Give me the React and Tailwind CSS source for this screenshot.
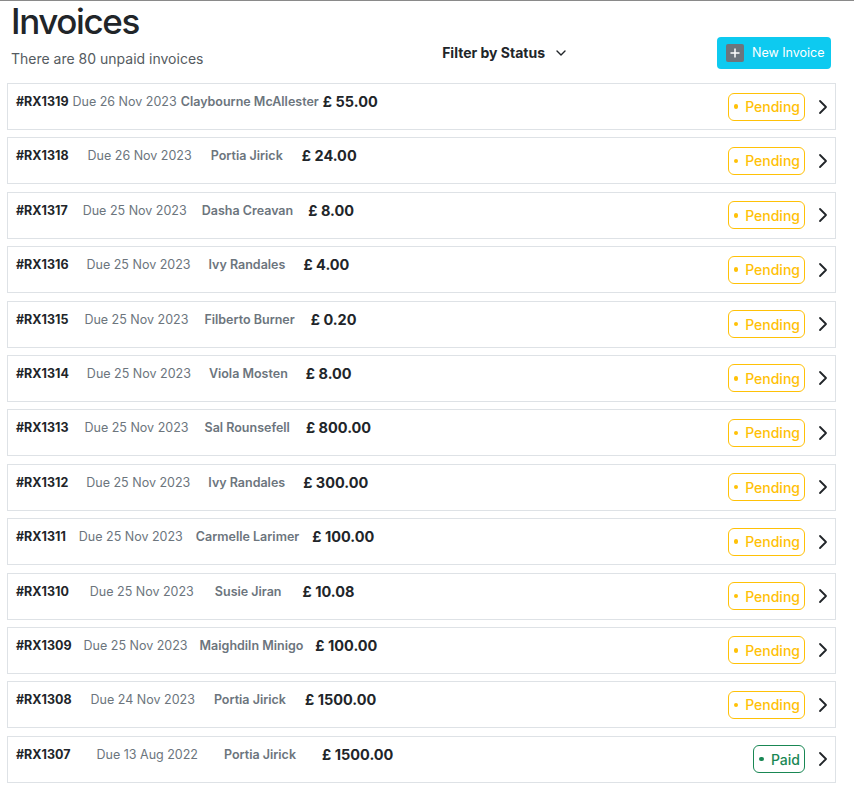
import React from "react";

const rows = [
  { id: "#RX1319", due: "Due 26 Nov 2023", name: "Claybourne McAllester", amt: "£ 55.00", st: "Pending", gap: "gap-[4px]" },
  { id: "#RX1318", due: "Due 26 Nov 2023", name: "Portia Jirick", amt: "£ 24.00", st: "Pending", gap: "gap-[19px]" },
  { id: "#RX1317", due: "Due 25 Nov 2023", name: "Dasha Creavan", amt: "£ 8.00", st: "Pending", gap: "gap-[15px]" },
  { id: "#RX1316", due: "Due 25 Nov 2023", name: "Ivy Randales", amt: "£ 4.00", st: "Pending", gap: "gap-[18px]" },
  { id: "#RX1315", due: "Due 25 Nov 2023", name: "Filberto Burner", amt: "£ 0.20", st: "Pending", gap: "gap-[16px]" },
  { id: "#RX1314", due: "Due 25 Nov 2023", name: "Viola Mosten", amt: "£ 8.00", st: "Pending", gap: "gap-[18px]" },
  { id: "#RX1313", due: "Due 25 Nov 2023", name: "Sal Rounsefell", amt: "£ 800.00", st: "Pending", gap: "gap-[16px]" },
  { id: "#RX1312", due: "Due 25 Nov 2023", name: "Ivy Randales", amt: "£ 300.00", st: "Pending", gap: "gap-[18px]" },
  { id: "#RX1311", due: "Due 25 Nov 2023", name: "Carmelle Larimer", amt: "£ 100.00", st: "Pending", gap: "gap-[13px]" },
  { id: "#RX1310", due: "Due 25 Nov 2023", name: "Susie Jiran", amt: "£ 10.08", st: "Pending", gap: "gap-[21px]" },
  { id: "#RX1309", due: "Due 25 Nov 2023", name: "Maighdiln Minigo", amt: "£ 100.00", st: "Pending", gap: "gap-[12px]" },
  { id: "#RX1308", due: "Due 24 Nov 2023", name: "Portia Jirick", amt: "£ 1500.00", st: "Pending", gap: "gap-[19px]" },
  { id: "#RX1307", due: "Due 13 Aug 2022", name: "Portia Jirick", amt: "£ 1500.00", st: "Paid", gap: "gap-[26px]" },
];

function Badge({ st }) {
  const paid = st === "Paid";
  return (
    <div
      className={
        "flex h-[28px] items-center rounded-[6px] border pl-[5px] pr-[4px] text-[14px] font-medium " +
        (paid ? "border-[#198754] text-[#198754]" : "border-[#ffc107] text-[#ffc107]")
      }
    >
      <span className={"mr-[7px] h-[4.5px] w-[4.5px] rounded-full " + (paid ? "bg-[#198754]" : "bg-[#ffc107]")} />
      {st}
    </div>
  );
}

function Chevron() {
  return (
    <svg width="12" height="16" viewBox="0 0 12 16" className="text-[#212529]">
      <polyline points="3,2 9,8 3,14" fill="none" stroke="currentColor" strokeWidth="1.8" strokeLinecap="round" strokeLinejoin="round" />
    </svg>
  );
}

export default function App() {
  return (
    <div className="min-h-[786px] w-[854px] border-t border-[#8a8a8a] bg-white text-[#212529]" style={{ fontFamily: "Inter, 'Noto Sans', sans-serif" }}>
      <div className="flex items-start pl-[11px] pr-[23px]">
        <div className="flex-1">
          <h1 className="mt-[2px] text-[35px] font-medium leading-[36px] tracking-[-1.4px]">Invoices</h1>
          <p className="mt-[10px] text-[14px] leading-[20px] text-[#555b61]">There are 80 unpaid invoices</p>
        </div>
        <div className="mt-[42px] flex items-center">
          <span className="text-[14px] font-bold leading-[20px]">Filter by Status</span>
          <svg width="12" height="8" viewBox="0 0 12 8" className="ml-[10px]">
            <polyline points="2,2 6,6 10,2" fill="none" stroke="#212529" strokeWidth="1.4" strokeLinecap="round" strokeLinejoin="round" />
          </svg>
        </div>
        <button className="ml-[150px] mt-[36px] flex h-[32px] w-[114px] items-center rounded-[4px] bg-[#0dcaf0] pl-[9px] text-[12.5px] text-white">
          <span className="mr-[8px] flex h-[18px] w-[18px] items-center justify-center rounded-[2px] bg-[#6c757d]">
            <svg width="12" height="12" viewBox="0 0 12 12">
              <path d="M6 1.5v9M1.5 6h9" stroke="white" strokeWidth="1.5" />
            </svg>
          </span>
          New Invoice
        </button>
      </div>
      <div className="mt-[14px] flex flex-col gap-[7.4px] pl-[7px] pr-[18px]">
        {rows.map((r) => (
          <div key={r.id} className="flex h-[47px] items-center border border-[#dee2e6] pl-[8px] pr-[6px]">
            <div className={"flex flex-1 items-start self-start pt-[6px] " + r.gap}>
              <span className="mt-[2px] text-[12.5px] font-bold leading-[19px]">{r.id}</span>
              <span className="mt-[2px] text-[12.5px] leading-[19px] text-[#6c757d]">{r.due}</span>
              <span className="mt-[2px] text-[12.5px] font-semibold leading-[19px] text-[#6c757d]">{r.name}</span>
              <span className="text-[14.5px] font-bold leading-[24px]">{r.amt}</span>
            </div>
            <Badge st={r.st} />
            <div className="ml-[12px]">
              <Chevron />
            </div>
          </div>
        ))}
      </div>
    </div>
  );
}
